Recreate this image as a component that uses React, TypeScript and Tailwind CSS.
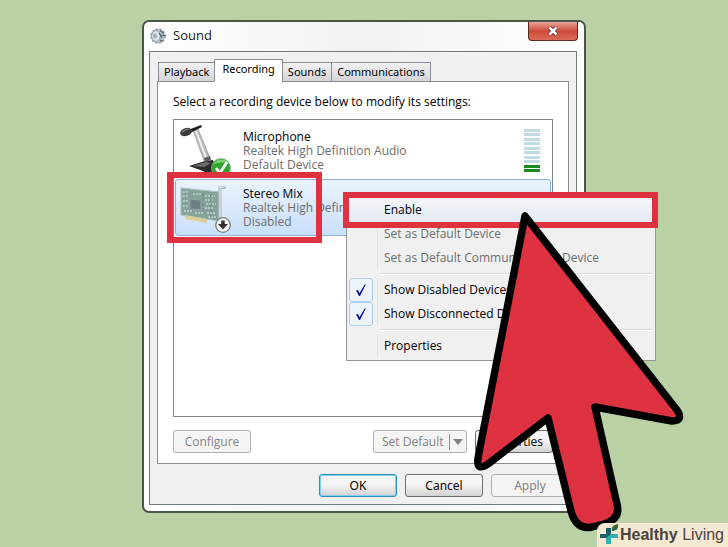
import type { ReactNode } from 'react'

const TABS = ['Playback', 'Recording', 'Sounds', 'Communications']

const METER = [false, false, false, false, false, false, false, false, true, true]

type MenuEntry = { label: string; enabled?: boolean; checked?: boolean; hot?: boolean; divider?: boolean }

const MENU: MenuEntry[] = [
  { label: 'Enable', enabled: true, hot: true },
  { label: 'Set as Default Device' },
  { label: 'Set as Default Communications Device' },
  { label: 'Show Disabled Devices', enabled: true, checked: true, divider: true },
  { label: 'Show Disconnected Devices', enabled: true, checked: true },
  { label: 'Properties', enabled: true, divider: true },
]

function SpeakerIcon() {
  return (
    <svg viewBox="0 0 18 18" className="h-[18px] w-[18px]" aria-hidden="true">
      <circle cx="9" cy="9" r="7" fill="#b9c1c9" stroke="#9aa2aa" strokeWidth="1.6" strokeDasharray="2.2 1.6" />
      <ellipse cx="7" cy="9" rx="4.4" ry="5.4" fill="#dfe4e9" stroke="#98a0a8" />
      <ellipse cx="6" cy="9" rx="2" ry="2.6" fill="#a3adb8" />
      <path d="M11 3.5l4 3M12 8l4.5 1M11 13l3 1.5M10 6l3 5" stroke="#59616a" strokeWidth="1.1" />
    </svg>
  )
}

function MicrophoneIcon() {
  return (
    <svg viewBox="0 0 56 54" className="h-[54px] w-14" aria-hidden="true">
      <path d="M10 42l16-5 8-1 4 9-6 7-8-5z" fill="#2b2b2b" />
      <path d="M13 42l14-4 5 1-7 4z" fill="#6c6c6c" />
      <path d="M14 6l5-1 12 29-6 3z" fill="#b9b9b9" stroke="#8a8a8a" strokeWidth=".6" />
      <path d="M17 7l10 27" stroke="#f1f1f1" strokeWidth="2" />
      <path d="M25 34l6-2 1 4-6 2z" fill="#5c5c5c" />
      <path d="M9 6l13-5 1 2-12 6z" fill="#1f1f1f" />
      <ellipse cx="7" cy="8" rx="6" ry="4" fill="#3a3a3a" transform="rotate(-16 7 8)" />
      <path d="M3 8c2-2 4-3 7-3" stroke="#8a8a8a" strokeWidth="1.2" fill="none" />
      <circle cx="42" cy="44" r="9.500" fill="#2fa52c" stroke="#7cc47a" strokeWidth=".8" />
      <path d="M34 41a9 9 0 0 1 16-1c-5-2-11-2-16 1z" fill="#7fce79" />
      <path d="M37 44l4 5 7-11" stroke="#fff" strokeWidth="2.800" fill="none" />
    </svg>
  )
}

function SoundCardIcon() {
  return (
    <svg viewBox="0 0 56 50" className="h-[50px] w-14" aria-hidden="true">
      <path d="M2 5l38 4v29L2 32z" fill="#86a39b" stroke="#a9c0bd" />
      <path d="M6 32l22 4v4L6 36z" fill="#d9cf98" />
      <path d="M11 16l11 1v10l-11-1z" fill="#6f7f86" stroke="#94a4a8" />
      <path
        d="M4 9h6M14 11h8M26 13h10M26 17h9M27 21h10M26 25h8M4 13h5M4 18h5M4 23h5M5 28h8M16 30h9M28 30h9M29 34h8"
        stroke="#bfd4ce"
        strokeWidth="1.4"
        strokeDasharray="2 1"
      />
      <path d="M24 10v18M32 11v24" stroke="#66857c" strokeWidth="1" strokeDasharray="3 2" />
      <path d="M47 4l-6 1v36" stroke="#a9b4c0" strokeWidth="3" fill="none" />
      <path d="M47 3.500l-6 1v36" stroke="#e9eef4" strokeWidth="1" fill="none" />
      <circle cx="44" cy="42" r="7.300" fill="#f6f6f6" stroke="#7c7c7c" strokeWidth="1.300" />
      <path d="M42.300 37.500h3.400V41H49l-5 5.500-5-5.500h3.300z" fill="#2f2f2f" />
    </svg>
  )
}

function Device({ icon, name, status, selected, children }: { icon: ReactNode; name: string; status: string; selected?: boolean; children?: ReactNode }) {
  return (
    <li
      className={[
        'flex h-[57px] items-center rounded-[3px] border pl-[3px] pr-2',
        selected ? 'border-[#8fb0dd] bg-linear-to-b from-[#eaf3fd] to-[#c9dffa]' : 'border-transparent',
      ].join(' ')}
    >
      <div className="w-16 shrink-0">{icon}</div>
      <div className="flex-1 text-[12px] leading-[14px] text-[#6d6d6d]">
        <p className="text-black">{name}</p>
        <p>Realtek High Definition Audio</p>
        <p>{status}</p>
      </div>
      {children}
    </li>
  )
}

function ContextMenu() {
  return (
    <div
      role="menu"
      className="absolute left-[204px] top-[175px] w-[310px] border border-[#979797] bg-[#f0f0f0] p-[2px] text-[12px]"
    >
      {MENU.map(item => (
        <div key={item.label}>
          {item.divider && <div className="my-[3px] ml-8 h-[2px] border-t border-[#dcdcdc] bg-white" />}
          <button
            type="button"
            role={item.checked ? 'menuitemcheckbox' : 'menuitem'}
            aria-checked={item.checked}
            disabled={!item.enabled}
            className={[
              'flex h-6 w-full items-center text-left',
              item.enabled ? 'text-black' : 'text-[#6d6d6d]',
              item.hot ? 'bg-linear-to-b from-[#f3f5f9] to-[#e3eaf4]' : '',
            ].join(' ')}
          >
            <span
              className={[
                'flex h-6 w-6 items-center justify-center rounded-[3px] border',
                item.checked ? 'border-[#aed0f0] bg-[#edf3fa]' : 'border-transparent',
              ].join(' ')}
            >
              {item.checked && (
                <svg viewBox="0 0 12 14" className="h-[14px] w-3" aria-hidden="true">
                  <path d="M1 7.500l2-.5 1.500 3L10 1l.8.4L5 13H4z" fill="#10109a" />
                </svg>
              )}
            </span>
            <span className={item.hot ? 'ml-1 pl-[7px] leading-6' : 'ml-1 h-6 border-l border-[#e2e3e3] pl-[6px] leading-6'}>{item.label}</span>
          </button>
        </div>
      ))}
    </div>
  )
}

function Pointer() {
  return (
    <svg viewBox="470 205 220 330" className="pointer-events-none absolute left-[328px] top-[185px] h-[330px] w-[220px]" aria-hidden="true">
      <path
        d="M525 216L478 458Q476 472 488 464L548 418L571 511Q576 530 592 527L604 524Q621 519 617 504L595 407L672 421Q684 421 677 410Z"
        fill="#de3240"
        stroke="#000"
        strokeWidth="7.400"
        strokeLinejoin="round"
      />
    </svg>
  )
}

const BUTTON = 'h-[23px] rounded-[3px] border text-[12px]'
const BUTTON_ON = 'border-[#707070] bg-linear-to-b from-[#f4f4f4] from-45% to-[#d2d2d2] text-black'
const BUTTON_OFF = 'border-[#adb2b5] bg-[#f4f4f4] text-[#838383]'

export default function App() {
  return (
    <main className="relative flex min-h-screen justify-center bg-[#b9d1a4] pt-5 font-['Open_Sans','Noto_Sans',sans-serif]">
      <div className="relative w-[444px] self-start">
        <section
          aria-label="Sound"
          className="relative rounded-[7px] border-2 border-[#4c5647] bg-white bg-linear-to-r from-white via-[#f1f1f1] to-white pb-[6px] pl-[5px] pr-[7px]"
        >
          <header className="flex h-[29px] items-center gap-[6px] pb-px text-[13px] text-[#222]">
            <SpeakerIcon />
            <h1>Sound</h1>
          </header>
          <button
            type="button"
            aria-label="Close"
            className="absolute right-[6px] top-0 flex h-[19px] w-[50px] items-center justify-center rounded-b-[4px] border border-t-0 border-[#5b2a25] bg-linear-to-b from-[#e7a397] via-[#cd4a3a] to-[#d96a56]"
          >
            <svg viewBox="0 0 12 10" className="h-[10px] w-3" aria-hidden="true">
              <path d="M2.500 1.500l7 7M9.500 1.500l-7 7" stroke="#5d3330" strokeWidth="4.400" />
              <path d="M2.500 1.500l7 7M9.500 1.500l-7 7" stroke="#fff" strokeWidth="2.600" />
            </svg>
          </button>

          <div className="border border-[#75797c] bg-[#f0f0f0] p-[7px]">
            <div role="tablist" className="relative z-10 -mb-px ml-[1px] flex items-end font-['Noto_Sans',sans-serif] text-[11px] text-black">
              {TABS.map(tab => (
                <button
                  key={tab}
                  type="button"
                  role="tab"
                  aria-selected={tab === 'Recording'}
                  className={[
                    '-mr-px border border-[#898c95]',
                    tab === 'Recording' ? 'h-[23px] border-b-white bg-white px-[7px] pb-[2px]' : 'h-5 bg-linear-to-b from-[#f2f2f2] to-[#d4d4d8] px-[5px]',
                  ].join(' ')}
                >
                  {tab}
                </button>
              ))}
            </div>
            <div className="border border-[#898c95] bg-white px-[15px] pb-[10px] pt-3">
              <p className="text-[12px] leading-4 text-black">Select a recording device below to modify its settings:</p>
              <ul className="mt-[9px] h-[298px] border border-[#7d838b] px-[1px] pt-[2px]">
                <Device icon={<MicrophoneIcon />} name="Microphone" status="Default Device">
                  <div className="mr-[2px] flex h-[43px] w-4 flex-col justify-between">
                    {METER.map((lit, i) => (
                      <span key={i} className={lit ? 'h-[3px] bg-[#1a8a1a]' : 'h-[3px] bg-[#c0dbe2]'} />
                    ))}
                  </div>
                </Device>
                <Device icon={<SoundCardIcon />} name="Stereo Mix" status="Disabled" selected />
              </ul>
              <div className="mt-[13px] flex gap-2">
                <button type="button" disabled className={`${BUTTON} ${BUTTON_OFF} mr-auto w-[78px]`}>
                  Configure
                </button>
                <button type="button" disabled className={`${BUTTON} ${BUTTON_OFF} flex w-[94px] items-center justify-between pl-2`}>
                  Set Default
                  <span className="flex h-4 items-center border-l border-[#8c8c8c] px-[3px]">
                    <svg viewBox="0 0 10 6" className="h-[6px] w-[10px]" aria-hidden="true">
                      <path d="M0 0h10L5 6z" fill="#838383" />
                    </svg>
                  </span>
                </button>
                <button type="button" className={`${BUTTON} ${BUTTON_ON} w-[78px]`}>
                  Properties
                </button>
              </div>
            </div>
            <footer className="mt-[10px] flex justify-end gap-2 font-['Noto_Sans',sans-serif]">
              <button type="button" className={`${BUTTON} w-[78px] border-[#2f8fb8] bg-linear-to-b from-[#f4f4f4] from-45% to-[#d2d2d2] text-black shadow-[inset_0_0_0_1px_#7fd0ee]`}>
                OK
              </button>
              <button type="button" className={`${BUTTON} ${BUTTON_ON} w-[78px]`}>
                Cancel
              </button>
              <button type="button" disabled className={`${BUTTON} ${BUTTON_OFF} w-[78px]`}>
                Apply
              </button>
            </footer>
          </div>
        </section>

        <ContextMenu />
        <div className="pointer-events-none absolute left-[25px] top-[152px] h-[71px] w-[155px] border-[6px] border-[#de3240]" />
        <div className="pointer-events-none absolute left-[201px] top-[172px] h-9 w-[315px] border-[6px] border-[#de3240]" />
        <Pointer />
      </div>

      <div className="absolute bottom-0 right-0 flex h-6 items-center gap-px rounded-tl-lg bg-[#f6e9d2] pl-[2px] pr-1 font-['Liberation_Sans',Arial,sans-serif] text-[16px] text-[#4a4340]">
        <svg viewBox="0 0 20 22" className="h-[22px] w-5" aria-hidden="true">
          <path d="M7 4h5v6h7v4h-7v6H7v-6H1v-4h6z" fill="#2fb0ae" />
          <path d="M7 4h5v6l-5 4H1v-4h6z" fill="#1b5f68" />
          <path d="M13 7c-1-4 1-6 6-7 1 5-2 7-6 7z" fill="#2f6d35" />
        </svg>
        <p>
          <b>Healthy</b> Living
        </p>
      </div>
    </main>
  )
}
